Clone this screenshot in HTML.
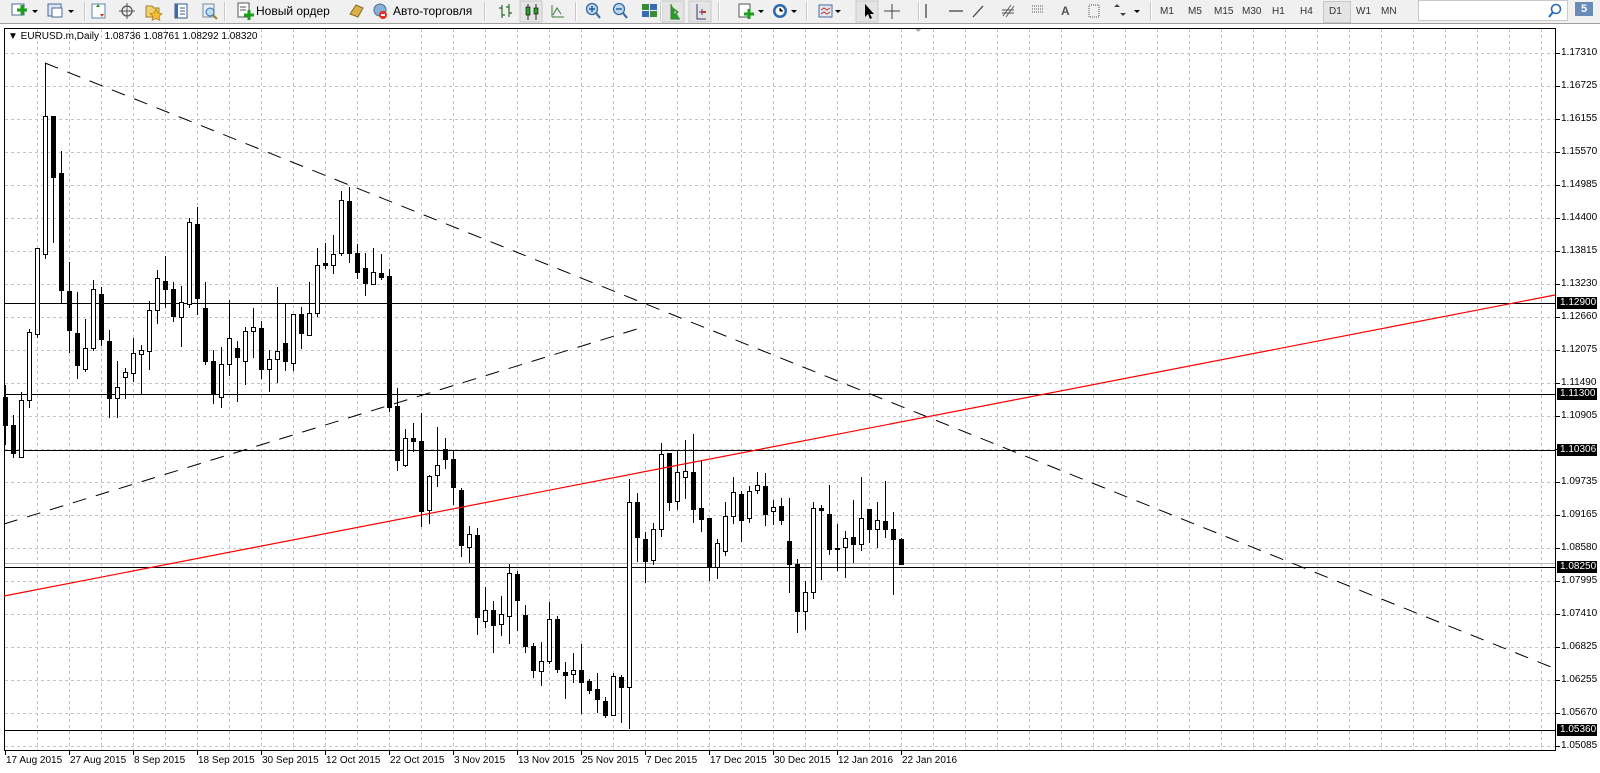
<!DOCTYPE html>
<html><head><meta charset="utf-8">
<style>
html,body{margin:0;padding:0;width:1600px;height:773px;overflow:hidden;background:#fff;font-family:"Liberation Sans",sans-serif;}
#tb{position:absolute;left:0;top:0;width:1600px;height:23px;background:#f0f0f0;border-bottom:1px solid #a0a0a0;}
.t{position:absolute;font-size:12px;color:#000;top:4px;}
.tf{position:absolute;font-size:10px;color:#333;top:6px;}
.sep{position:absolute;top:2px;width:1px;height:19px;background:#c8c8c8;border-right:1px solid #fff;}
.pl{position:absolute;left:1561px;font-size:10px;color:#000;line-height:12px;}
.pb{position:absolute;left:1557px;width:40px;background:#000;color:#fff;font-size:10px;line-height:12px;padding-left:3px;box-sizing:border-box;}
.dl{position:absolute;top:755px;font-size:10px;color:#000;}
</style></head><body>
<div id="tb">
 <svg width="1600" height="23" style="position:absolute;left:0;top:0">
  <rect x="12" y="4" width="12" height="11" fill="#fff" stroke="#4a6a9a"/><path d="M17 10h10M22 5v10" stroke="#1aa01a" stroke-width="3"/>
  <path d="M32 10l3 3 3-3z" fill="#000"/>
  <rect x="48" y="4" width="13" height="12" fill="#dde6f2" stroke="#4a6a9a"/><rect x="52" y="8" width="10" height="9" fill="#fff" stroke="#4a6a9a"/>
  <path d="M68 10l3 3 3-3z" fill="#000"/>
  <rect x="92" y="4" width="13" height="14" fill="#fff" stroke="#5a8ab0"/><path d="M96 7l2-3 2 3z" fill="#1a9a1a"/><path d="M100 14l2 3 2-3z" fill="#d03020"/>
  <circle cx="127" cy="11" r="5" fill="none" stroke="#555" stroke-width="1.3"/><path d="M127 3v16M119 11h16" stroke="#555"/>
  <path d="M146 6h6l2 2h5v9h-13z" fill="#f0d070" stroke="#a08030"/><path d="M156 9l2 4 4 .5-3 3 1 4-4-2-4 2 1-4-3-3 4-.5z" fill="#f5c030" stroke="#a07010" stroke-width=".6"/>
  <rect x="175" y="4" width="12" height="14" fill="#fff" stroke="#3a5a8a"/><rect x="175" y="4" width="3" height="14" fill="#3a6ab0"/><path d="M180 8h5M180 11h5M180 14h5" stroke="#3a5a8a"/>
  <rect x="203" y="4" width="11" height="13" fill="#e8eef6" stroke="#7a8aa0"/><circle cx="210" cy="12" r="4" fill="#bde" stroke="#3a6ab0"/><path d="M213 15l4 4" stroke="#a08030" stroke-width="2"/>
  <rect x="238" y="3" width="11" height="14" fill="#fff" stroke="#555"/><path d="M240 7h6M240 10h6" stroke="#555"/><path d="M244 15h10M249 10v10" stroke="#1aa01a" stroke-width="3"/>
  <g transform="translate(8,0)">
  <path d="M342 14l6-9 7 3-5 9z" fill="#d8b048" stroke="#8a6a20"/>
  <circle cx="372" cy="10" r="6" fill="#8ab0d8" stroke="#4a6a9a"/><circle cx="375" cy="15" r="4" fill="#e03020"/><rect x="373" y="14" width="4" height="2" fill="#fff"/>
  </g>
  <g transform="translate(12,0)">
  <path d="M490 5v13M490 8h-3M490 15h3M497 4v13M497 7h-3M497 13h3" stroke="#2a6a2a" stroke-width="1.2"/>
  <rect x="508" y="1" width="22" height="21" fill="#e4e4e4" stroke="#c8c8c8"/>
  <path d="M516 4v16M524 4v16" stroke="#2a2a2a"/><rect x="514" y="7" width="4" height="8" fill="#2aa02a" stroke="#000" stroke-width=".6"/><rect x="522" y="8" width="4" height="6" fill="#2aa02a" stroke="#000" stroke-width=".6"/>
  <path d="M540 17v-12M540 17h12M541 15l4-7 4 6" stroke="#3a7a3a" fill="none"/>
  </g>
  <g transform="translate(15,0)">
  <circle cx="577" cy="9" r="5.5" fill="#bcd8f0" stroke="#3a6aa0" stroke-width="1.3"/><path d="M574 9h6M577 6v6" stroke="#1a5a9a" stroke-width="1.4"/><path d="M581 13l4 5" stroke="#3a6aa0" stroke-width="2.2"/>
  <circle cx="604" cy="9" r="5.5" fill="#bcd8f0" stroke="#3a6aa0" stroke-width="1.3"/><path d="M601 9h6" stroke="#1a5a9a" stroke-width="1.4"/><path d="M608 13l4 5" stroke="#3a6aa0" stroke-width="2.2"/>
  <rect x="627" y="4" width="7" height="6" fill="#3a8a3a"/><rect x="635" y="4" width="7" height="6" fill="#3a6ab0"/><rect x="627" y="11" width="7" height="6" fill="#3a6ab0"/><rect x="635" y="11" width="7" height="6" fill="#3a8a3a"/>
  </g>
  <g transform="translate(4,0)">
  <rect x="658" y="1" width="22" height="21" fill="#e4e4e4" stroke="#c8c8c8"/><path d="M667 4v15h9M670 9l4 3-4 3z" stroke="#3a7a3a" fill="#2aa02a" stroke-width="1"/>
  <rect x="685" y="1" width="22" height="21" fill="#e4e4e4" stroke="#c8c8c8"/><path d="M693 4v15h9M695 12h6M698 9v6" stroke="#3a3a7a" fill="none"/><path d="M698 12h4" stroke="#d03020" stroke-width="2"/>
  </g>
  <g transform="translate(15,0)">
  <rect x="724" y="4" width="11" height="13" fill="#fff" stroke="#555"/><path d="M729 14h10M734 9v10" stroke="#1aa01a" stroke-width="3"/><path d="M743 10l3 3 3-3z" fill="#000"/>
  <circle cx="765" cy="11" r="7" fill="#2a6ab0"/><circle cx="765" cy="11" r="4.5" fill="#fff"/><path d="M765 8v3h3" stroke="#000"/><path d="M776 10l3 3 3-3z" fill="#000"/>
  </g>
  <g transform="translate(6,0)">
  <rect x="813" y="5" width="13" height="12" fill="#dfe8f4" stroke="#4a6a9a"/><path d="M815 10l3-2 3 2 3-2M815 14l3-2 3 2 3-2" stroke="#c03020" fill="none"/><path d="M829 10l3 3 3-3z" fill="#000"/>
  </g>
  <g transform="translate(23,0)">
  <rect x="833" y="1" width="22" height="21" fill="#e4e4e4" stroke="#c8c8c8"/><path d="M842 4v13l3-3 2 5 2-1-2-4h4z" fill="#000"/>
  <path d="M869 4v15M861 11h16" stroke="#444"/>
  <path d="M903 4v14" stroke="#444" stroke-width="1.3"/><path d="M926 11h14" stroke="#444" stroke-width="1.3"/><path d="M950 17l10-11" stroke="#444" stroke-width="1.3"/>
  <path d="M980 16l8-11M983 17l8-11M979 10h12M979 13h12" stroke="#555" stroke-width=".9"/>
  <path d="M1009 6h12M1009 9h12M1009 12h12" stroke="#555" stroke-dasharray="1,1"/>
  <rect x="1066" y="5" width="10" height="12" fill="none" stroke="#555" stroke-dasharray="1,1"/>
  <path d="M1091 7l3-3 3 3zM1097 13l3 3 3-3z" fill="#444"/><path d="M1111 10l3 3 3-3z" fill="#000"/>
  </g>
 </svg>
 <div class="sep" style="left:84px"></div><div class="sep" style="left:224px"></div><div class="sep" style="left:484px"></div><div class="sep" style="left:575px"></div><div class="sep" style="left:660px"></div><div class="sep" style="left:718px"></div><div class="sep" style="left:806px"></div><div class="sep" style="left:918px"></div><div class="sep" style="left:1150px"></div>
 <div class="t" style="left:256px">Новый ордер</div>
 <div class="t" style="left:393px">Авто-торговля</div>
 <div class="t" style="left:1061px;font-weight:bold;color:#555">A</div>
 <div style="position:absolute;left:1323px;top:1px;width:26px;height:20px;background:#e4e4e4;border:1px solid #c8c8c8"></div>
 <div class="tf" style="left:1160px">M1</div><div class="tf" style="left:1188px">M5</div><div class="tf" style="left:1214px">M15</div><div class="tf" style="left:1242px">M30</div><div class="tf" style="left:1272px">H1</div><div class="tf" style="left:1300px">H4</div>
 <div class="tf" style="left:1329px">D1</div><div class="tf" style="left:1356px">W1</div><div class="tf" style="left:1381px">MN</div>
 <div style="position:absolute;left:1418px;top:0;width:150px;height:21px;background:#fff;border:1px solid #c8c8c8;box-sizing:border-box"></div>
 <svg width="20" height="20" style="position:absolute;left:1546px;top:2px"><circle cx="10" cy="7" r="4.5" fill="none" stroke="#2a6ab0" stroke-width="1.6"/><path d="M7 10l-4 5" stroke="#2a6ab0" stroke-width="2"/></svg>
 <div style="position:absolute;left:1575px;top:2px;width:18px;height:14px;background:#6a8ab8;color:#fff;font-size:11px;text-align:center;line-height:14px;font-weight:bold">5</div>
</div>

<svg id="ch" width="1600" height="773" style="position:absolute;left:0;top:0" shape-rendering="crispEdges">
 <rect x="0" y="24" width="1600" height="749" fill="#fff"/>
 <path d="M914 28h8l-4 4z" fill="#aaa"/>
 <g id="grid" stroke="#c4c4c4" stroke-dasharray="3,3"></g>
 <rect x="4.5" y="28.5" width="1551" height="722" fill="none" stroke="#000"/>
 <g stroke="#000">
  <line x1="5" y1="303.5" x2="1555" y2="303.5"/>
  <line x1="5" y1="394.5" x2="1555" y2="394.5"/>
  <line x1="5" y1="450.5" x2="1555" y2="450.5"/>
  <line x1="5" y1="563.5" x2="1555" y2="563.5" stroke="#bbb"/>
  <line x1="5" y1="567.5" x2="1555" y2="567.5"/>
  <line x1="5" y1="730.5" x2="1555" y2="730.5"/>
 </g>
 <g id="cdl"></g>
 <g shape-rendering="auto">
  <line x1="45" y1="63" x2="1551" y2="667" stroke="#000" stroke-width="1" stroke-dasharray="14,10"/>
  <line x1="4" y1="524" x2="637" y2="329" stroke="#000" stroke-width="1" stroke-dasharray="14,10"/>
  <line x1="4" y1="596" x2="1555" y2="295" stroke="#f00" stroke-width="1.2"/>
 </g>
 <g id="ticks" stroke="#000"></g>
</svg>

<div style="position:absolute;left:8px;top:31px;font-size:10px;color:#000">▼ EURUSD.m,Daily&nbsp; 1.08736 1.08761 1.08292 1.08320</div>

<div class="pl" style="top:47px">1.17310</div>
<div class="pl" style="top:80px">1.16725</div>
<div class="pl" style="top:113px">1.16155</div>
<div class="pl" style="top:146px">1.15570</div>
<div class="pl" style="top:179px">1.14985</div>
<div class="pl" style="top:212px">1.14400</div>
<div class="pl" style="top:245px">1.13815</div>
<div class="pl" style="top:278px">1.13230</div>
<div class="pl" style="top:311px">1.12660</div>
<div class="pl" style="top:344px">1.12075</div>
<div class="pl" style="top:377px">1.11490</div>
<div class="pl" style="top:410px">1.10905</div>
<div class="pl" style="top:476px">1.09735</div>
<div class="pl" style="top:509px">1.09165</div>
<div class="pl" style="top:542px">1.08580</div>
<div class="pl" style="top:575px">1.07995</div>
<div class="pl" style="top:608px">1.07410</div>
<div class="pl" style="top:641px">1.06825</div>
<div class="pl" style="top:674px">1.06255</div>
<div class="pl" style="top:707px">1.05670</div>
<div class="pl" style="top:740px">1.05085</div>
<div class="pb" style="top:297px">1.12900</div>
<div class="pb" style="top:388px">1.11300</div>
<div class="pb" style="top:444px">1.10306</div>
<div class="pb" style="top:561px">1.08250</div>
<div class="pb" style="top:724px">1.05360</div>

<div class="dl" style="left:6px">17 Aug 2015</div>
<div class="dl" style="left:70px">27 Aug 2015</div>
<div class="dl" style="left:134px">8 Sep 2015</div>
<div class="dl" style="left:198px">18 Sep 2015</div>
<div class="dl" style="left:262px">30 Sep 2015</div>
<div class="dl" style="left:326px">12 Oct 2015</div>
<div class="dl" style="left:390px">22 Oct 2015</div>
<div class="dl" style="left:454px">3 Nov 2015</div>
<div class="dl" style="left:518px">13 Nov 2015</div>
<div class="dl" style="left:582px">25 Nov 2015</div>
<div class="dl" style="left:646px">7 Dec 2015</div>
<div class="dl" style="left:710px">17 Dec 2015</div>
<div class="dl" style="left:774px">30 Dec 2015</div>
<div class="dl" style="left:838px">12 Jan 2016</div>
<div class="dl" style="left:902px">22 Jan 2016</div>

<script>
var NS="http://www.w3.org/2000/svg";
function el(p,t,a){var e=document.createElementNS(NS,t);for(var k in a)e.setAttribute(k,a[k]);p.appendChild(e);return e;}
var g=document.getElementById('grid');
for(var x=37;x<1555;x+=32)el(g,'line',{x1:x+.5,y1:29,x2:x+.5,y2:750});
for(var k=0;k<21;k++){var y=53+33*k;el(g,'line',{x1:5,y1:y+.5,x2:1555,y2:y+.5});}
el(g,'line',{x1:5,y1:746.5,x2:1555,y2:746.5});
var tk=document.getElementById('ticks');
for(var k=0;k<21;k++){var y=53+33*k;el(tk,'line',{x1:1556,y1:y+.5,x2:1560,y2:y+.5});}
el(tk,'line',{x1:1556,y1:746.5,x2:1560,y2:746.5});
for(var k=0;k<15;k++){var x=5+64*k;el(tk,'line',{x1:x+.5,y1:750,x2:x+.5,y2:755});}
var D=[[397,425,385,445,0],[425,453,415,458,0],[400,457,392,458,1],[332,400,329,408,1],[248,334,248,338,1],[116,254,63,259,1],[116,177,116,243,0],[173,290,151,303,0],[291,330,262,353,0],[333,365,292,379,0],
[348,369,319,372,1],[289,348,280,351,1],[294,339,287,346,0],[341,398,330,418,0],[387,398,361,418,1],[372,377,368,399,1],[353,373,338,382,1],[350,354,345,394,1],[310,351,301,370,1],[278,310,270,324,1],
[281,289,256,308,0],[289,316,282,322,0],[302,317,286,347,1],[222,304,218,308,1],[224,298,207,315,0],[308,361,282,365,0],[361,394,350,404,0],[364,397,347,408,1],[338,364,300,376,1],[348,357,341,402,0],
[331,361,327,385,1],[327,331,308,358,1],[328,369,321,379,0],[359,369,350,392,1],[351,359,287,383,1],[343,361,303,371,0],[314,363,314,371,1],[314,333,307,349,0],[313,335,282,336,1],[265,313,248,317,1],
[263,265,243,269,0],[254,265,235,274,1],[200,253,191,256,1],[201,253,187,263,0],[253,272,244,279,0],[268,283,253,296,0],[272,284,248,285,1],[273,277,254,280,0],[276,407,269,412,0],[406,460,388,471,0],
[438,465,429,467,1],[438,441,423,452,0],[441,511,413,527,0],[476,510,475,524,1],[465,475,427,487,1],[449,459,438,469,0],[459,487,451,505,0],[490,545,488,557,0],[534,547,526,563,1],[535,617,528,635,0],
[610,621,587,628,1],[610,625,601,653,0],[614,624,596,636,1],[573,616,564,644,1],[574,600,571,631,0],[615,646,605,653,0],[646,670,643,678,0],[661,671,642,686,1],[619,661,602,664,1],[619,669,616,673,0],
[672,675,662,699,0],[670,674,653,683,1],[670,682,644,714,0],[681,690,679,694,0],[689,699,673,713,0],[701,715,697,718,0],[676,715,673,715,1],[677,687,675,723,0],[502,687,479,729,1],[502,537,493,562,0],
[539,561,532,583,0],[529,560,523,565,1],[454,529,443,537,1],[453,502,453,511,0],[472,501,450,510,1],[471,477,440,499,1],[472,509,434,523,0],[508,519,461,532,0],[518,567,518,581,0],[543,567,539,579,1],
[516,551,502,556,1],[492,516,477,524,1],[494,520,491,542,0],[491,518,486,523,1],[485,490,472,494,1],[486,514,473,526,0],[507,511,500,525,1],[506,520,498,525,0],[541,564,498,593,0],[564,611,559,633,0],
[592,611,581,630,1],[508,592,502,599,1],[508,510,505,580,0],[514,549,485,555,0],[548,549,524,571,0],[538,547,531,578,1],[537,544,500,563,0],[518,544,477,551,1],[509,529,509,543,0],[520,529,502,548,1],
[521,529,481,538,0],[529,539,512,595,0],[539,564,538,565,0]];
var c=document.getElementById('cdl');
D.forEach(function(d,i){var x=5+8*i;
 el(c,'line',{x1:x+.5,y1:d[2],x2:x+.5,y2:d[3],stroke:'#000','stroke-width':1});
 var h=Math.max(d[1]-d[0],1);
 el(c,'rect',{x:x-1.5,y:d[0]+.5,width:4,height:h,fill:d[4]?'#fff':'#000',stroke:'#000','stroke-width':1});
});
</script>
</body></html>
